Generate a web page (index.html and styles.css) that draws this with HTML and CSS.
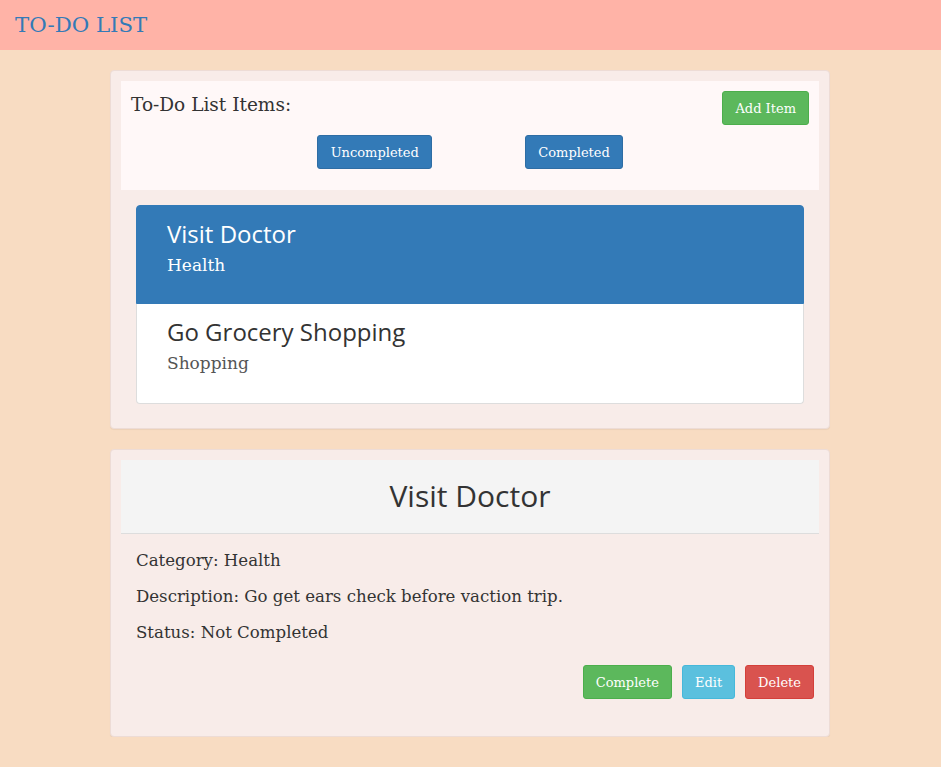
FILE: index.html
```html
<!DOCTYPE html>
<html>
<head>
<meta charset="utf-8">
<link rel="stylesheet" href="styles.css">
</head>
<body>
<header class="topbar"><span class="brand">TO-DO LIST</span></header>
<main class="container">
  <section class="panel">
    <div class="panel-top">
      <div class="top-row">
        <span class="list-title">To-Do List Items:</span>
        <button class="btn btn-success">Add Item</button>
      </div>
      <div class="filter-row">
        <button class="btn btn-primary btn-wide">Uncompleted</button>
        <button class="btn btn-primary">Completed</button>
      </div>
    </div>
    <div class="list-group">
      <div class="list-item active">
        <div class="item-title">Visit Doctor</div>
        <div class="item-sub">Health</div>
      </div>
      <div class="list-item">
        <div class="item-title">Go Grocery Shopping</div>
        <div class="item-sub">Shopping</div>
      </div>
    </div>
  </section>
  <section class="panel detail">
    <div class="detail-head"><h2>Visit Doctor</h2></div>
    <div class="detail-body">
      <p>Category: Health</p>
      <p>Description: Go get ears check before vaction trip.</p>
      <p>Status: Not Completed</p>
      <div class="actions">
        <button class="btn btn-success">Complete</button>
        <button class="btn btn-info">Edit</button>
        <button class="btn btn-danger">Delete</button>
      </div>
    </div>
  </section>
</main>
</body>
</html>
```

FILE: styles.css
```css
html, body { margin: 0; padding: 0; }
body {
  background: #f8dcc2;
  font-family: "DejaVu Serif", serif;
  font-size: 16px;
  color: #333;
}
.topbar {
  background: #ffb3a7;
  height: 50px;
  display: flex;
  align-items: center;
  padding-left: 15px;
}
.brand {
  color: #337ab7;
  font-family: "DejaVu Serif", serif;
  font-size: 21.3px;
  margin-top: -2px;
}
.container {
  width: 720px;
  margin: 20px 0 0 110px;
  display: flex;
  flex-direction: column;
  gap: 20px;
}
.panel {
  background: #f8ece9;
  border: 1px solid #eddcd6;
  border-radius: 4px;
  padding: 10px;
  box-shadow: 0 1px 1px rgba(0,0,0,0.05);
}
.panel-top {
  background: #fff8f8;
  height: 109px;
  padding: 10px 10px 0 10px;
  box-sizing: border-box;
}
.top-row {
  display: flex;
  justify-content: space-between;
  align-items: flex-start;
}
.list-title {
  font-size: 18.5px;
  margin-top: 3px;
}
.filter-row {
  display: flex;
  justify-content: center;
  gap: 93px;
  margin-top: 10px;
}
.btn {
  font-family: "DejaVu Serif", serif;
  font-size: 13px;
  color: #fff;
  border: 1px solid transparent;
  border-radius: 3px;
  height: 34px;
  padding: 0 12px;
  cursor: pointer;
}
.btn-wide { padding: 0 12.5px; }
.btn-success { background: #5cb85c; border-color: #4cae4c; }
.btn-primary { background: #337ab7; border-color: #2e6da4; }
.btn-info { background: #5bc0de; border-color: #46b8da; }
.btn-danger { background: #d9534f; border-color: #d43f3a; }
.list-group {
  margin: 15px 15px 14px;
}
.list-item {
  background: #fff;
  border: 1px solid #ddd;
  padding: 13px 30px 20px;
  height: 100px;
  box-sizing: border-box;
}
.list-item + .list-item { border-top: none; border-radius: 0 0 4px 4px; }
.list-item.active {
  background: #337ab7;
  border-color: #337ab7;
  color: #fff;
  border-radius: 4px 4px 0 0;
  height: 99px;
}
.item-title {
  font-family: "Open Sans", sans-serif;
  font-size: 24px;
  line-height: 30px;
}
.item-sub {
  font-size: 17px;
  line-height: 28px;
  margin-top: 2px;
  color: #555;
}
.list-item.active .item-sub { color: #fff; }
.detail { padding-bottom: 37px; }
.detail-head {
  background: #f4f4f4;
  border-bottom: 1px solid #ddd;
  height: 73px;
  display: flex;
  align-items: center;
  justify-content: center;
}
.detail-head h2 {
  margin: 0 0 2px;
  font-family: "Open Sans", sans-serif;
  font-weight: 400;
  font-size: 30px;
}
.detail-body {
  padding: 16px 5px 0 15px;
}
.detail-body p {
  margin: 0 0 14px;
  line-height: 22px;
  font-size: 16.6px;
}
.actions {
  display: flex;
  justify-content: flex-end;
  gap: 10px;
  margin-top: 21px;
}
```
